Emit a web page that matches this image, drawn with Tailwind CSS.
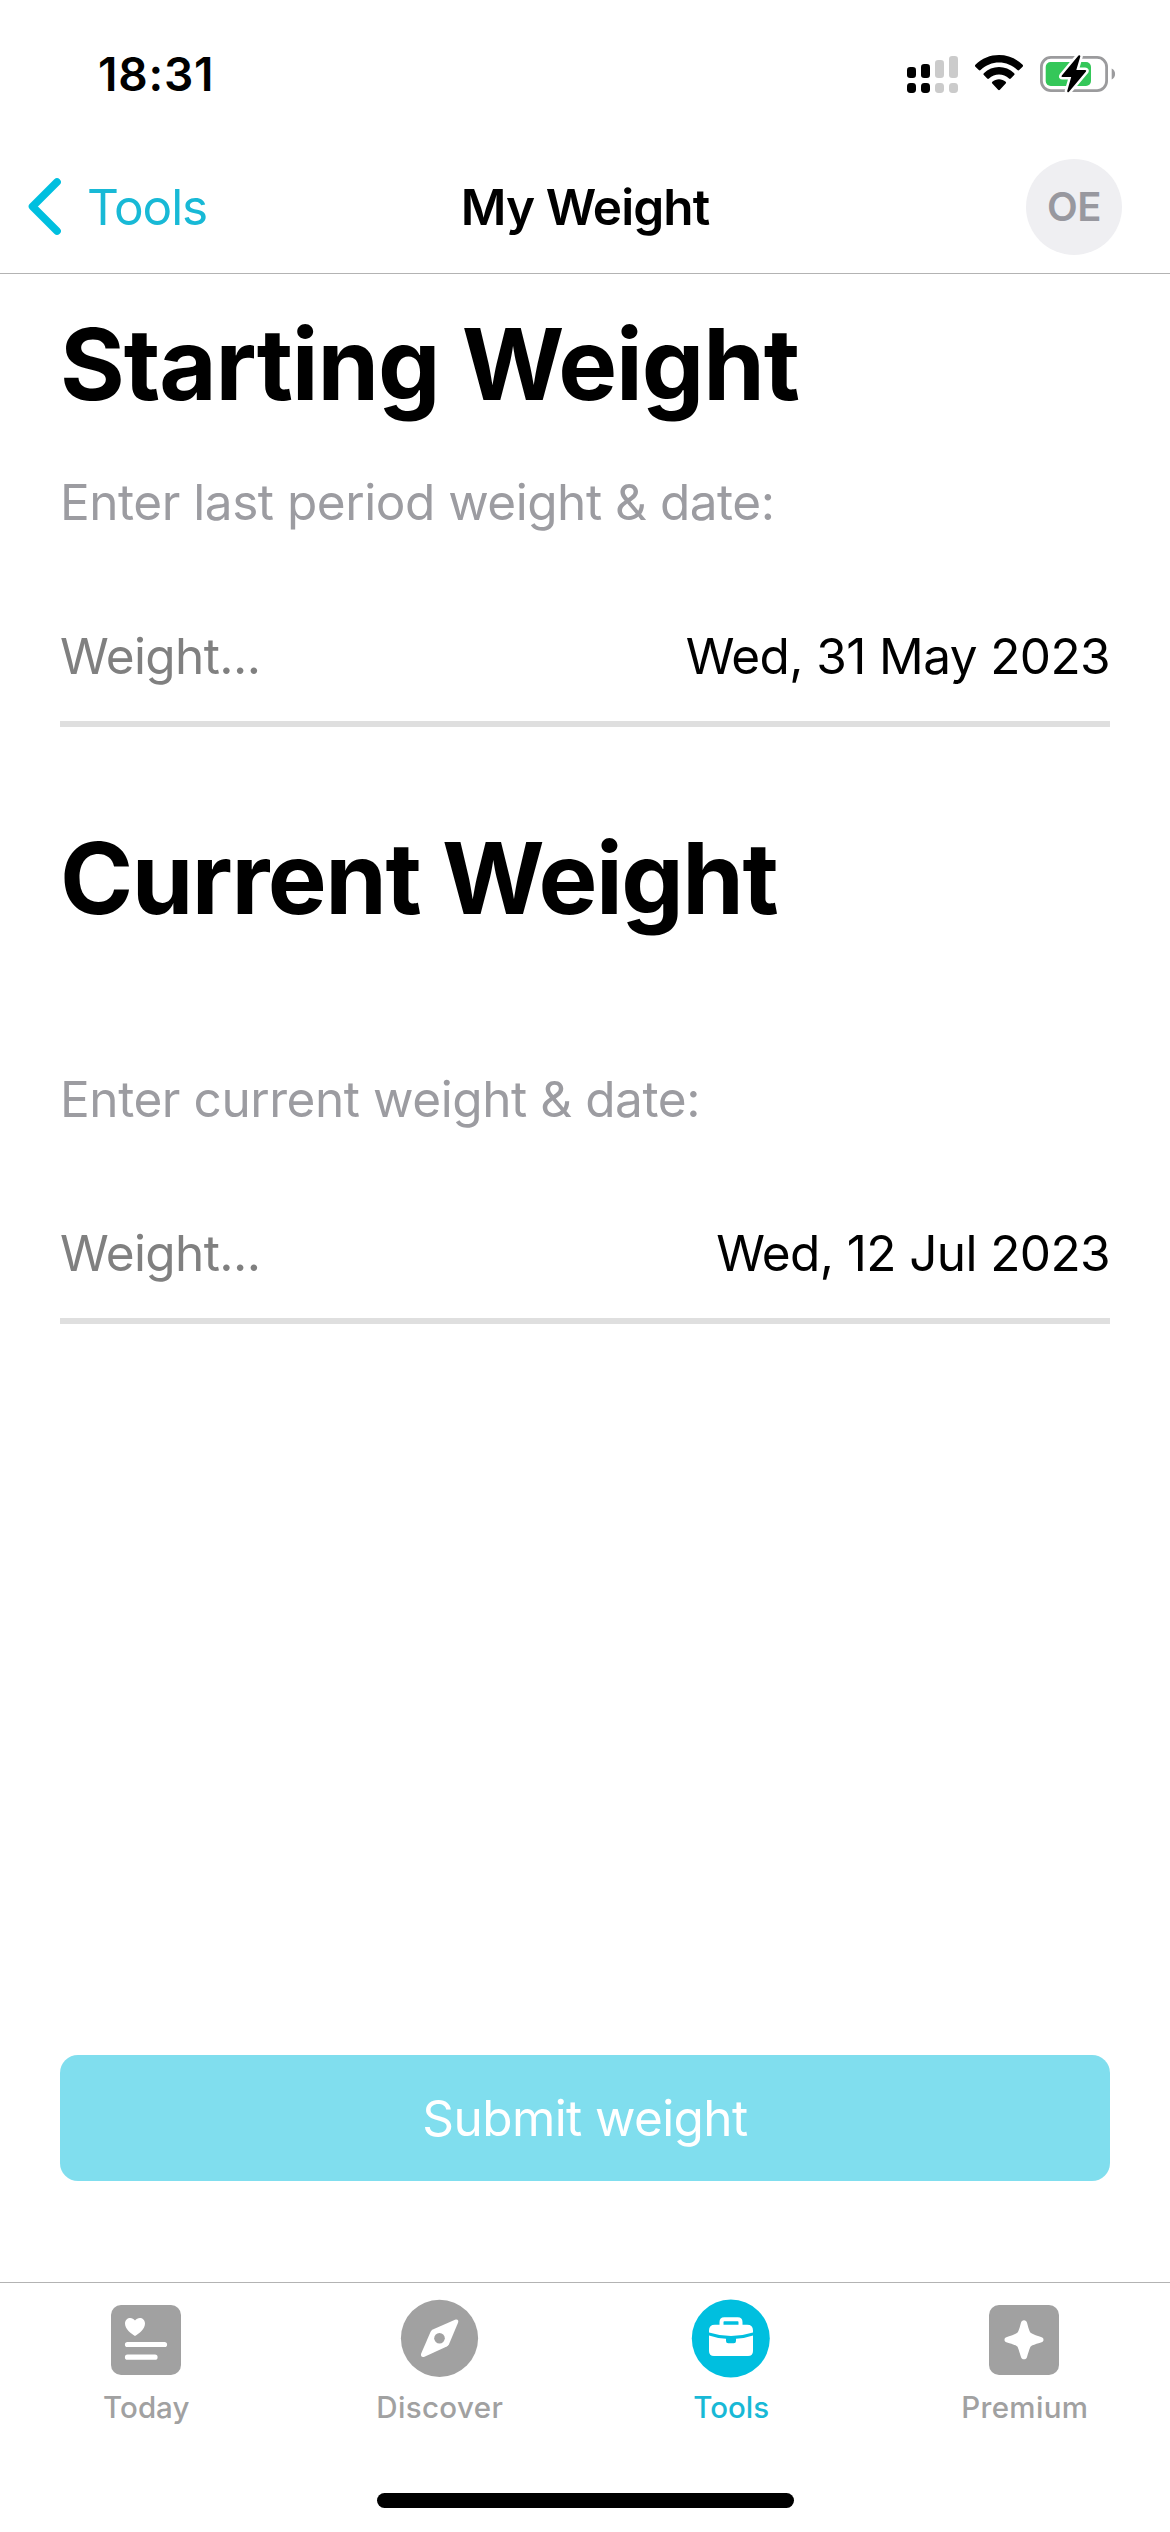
<!DOCTYPE html>
<html lang="en">
<head>
    <meta charset="UTF-8">
    <meta name="viewport" content="width=device-width, initial-scale=1.0">
    <title>My Weight</title>
    <script src="https://cdn.jsdelivr.net/npm/@tailwindcss/browser@4"></script>
</head>

<body class="bg-white font-[Inter,sans-serif] text-black">

    <div class="w-[1170px] h-[2532px] flex flex-col overflow-hidden">

        <!-- status bar -->
        <div class="flex justify-between h-[141px] pt-[54px] pl-[98px] pr-[54px] shrink-0">
            <div class="text-[46px] leading-[41px] h-10 font-semibold tracking-[0.8px]">18:31</div>

            <div class="flex gap-4">
                <svg class="w-[51px] h-10" viewBox="0 0 51 40">
                    <rect x="0" y="13" width="9" height="11" rx="3.2"/>
                    <rect x="14" y="10" width="9" height="14" rx="3.2"/>
                    <rect x="28" y="6" width="9" height="18" rx="3.2" fill="#cbcbcb"/>
                    <rect x="42" y="2" width="9" height="22" rx="3.2" fill="#cbcbcb"/>
                    <rect x="0" y="29" width="9" height="10" rx="3.4"/>
                    <rect x="14" y="29" width="9" height="10" rx="3.4"/>
                    <rect x="28" y="29" width="9" height="10" rx="3.4" fill="#cbcbcb"/>
                    <rect x="42" y="29" width="9" height="10" rx="3.4" fill="#cbcbcb"/>
                </svg>
                <svg class="w-[50px] h-10" viewBox="0 0 50 40">
                    <path d="M1.4 10.8C14.3-2.2 35.7-2.2 48.6 10.8Q49.5 11.8 48.6 12.7L45.2 16.1Q44.3 16.9 43.4 16.1C33.2 6.1 16.8 6.1 6.6 16.1Q5.7 16.9 4.8 16.1L1.4 12.7Q.5 11.8 1.4 10.8Z"/>
                    <path d="M9.8 19.2C18.2 11 31.8 11 40.2 19.2Q41.1 20.2 40.2 21.1L36.8 24.5Q35.9 25.3 35 24.5C29.4 19.2 20.6 19.2 15 24.5Q14.1 25.3 13.2 24.5L9.8 21.1Q8.9 20.2 9.8 19.2Z"/>
                    <path d="M18.3 27.7C22.1 24.3 27.9 24.3 31.7 27.7Q32.6 28.7 31.7 29.6L25.9 35.8Q25 36.7 24.1 35.8L18.3 29.6Q17.4 28.7 18.3 27.7Z"/>
                </svg>
                <svg class="w-[76px] h-10" viewBox="0 0 76 40">
                    <rect x="1.4" y="3.4" width="65.2" height="33.2" rx="9.5" fill="none" stroke="#9b9b9d" stroke-width="2.8"/>
                    <rect x="5.7" y="8" width="45.3" height="24" rx="5" fill="#34c759"/>
                    <path d="M71.7 14.5V25.5C76.2 23.5 76.2 16.5 71.7 14.5Z" fill="#9b9b9d"/>
                    <path d="M38.5 1.5L21.8 21.6Q20.8 23.1 22.6 23.1H31.2L27.2 37Q27.3 39.2 29 37.8L46 17.6Q46.9 16.1 45.1 16.1H36.3L40.3 2.5Q40.3.6 38.5 1.5Z" stroke="#fff" stroke-width="5" paint-order="stroke"/>
                </svg>
            </div>
        </div>

        <!-- nav bar -->
        <header class="grid grid-cols-3 items-center h-[133px] px-7 border-b border-[#b3b3b3] shrink-0">
            <a href="#" class="flex items-center gap-[26px] text-[#18b9d6]">
                <svg class="w-[33px] h-16" viewBox="0 0 33 64" fill="none" stroke="#00bfdf" stroke-width="7.6" stroke-linecap="round" stroke-linejoin="round">
                    <path d="M29 7L4.5 31.5L29 56"/>
                </svg>
                <span class="text-[49.5px] leading-[60px] tracking-[-1.1px]">Tools</span>
            </a>
            <h1 class="text-center whitespace-nowrap text-[49.5px] leading-[60px] font-semibold tracking-[-0.9px]">My Weight</h1>
            <div class="justify-self-end mr-5 flex items-center justify-center w-24 h-24 rounded-full bg-[#efeff2] text-[#98989f] text-[40px] font-semibold tracking-[-0.5px]">OE</div>
        </header>

        <main class="flex flex-col flex-1 px-[60px] pt-[30px] pb-[101px]">
            <h2 class="text-[99px] leading-[120px] font-bold tracking-[-1.15px]">Starting Weight</h2>
            <p class="mt-12 text-[49.5px] leading-[60px] tracking-[-0.47px] text-[#9c9ca1]">Enter last period weight &amp; date:</p>
            <div class="flex justify-between mt-[94px] pb-[35px] border-b-6 border-[#dfdfdf] text-[49.5px] leading-[60px] tracking-[-0.6px]">
                <span class="text-[#808080]">Weight...</span>
                <span>Wed, 31 May 2023</span>
            </div>

            <h2 class="mt-[91px] text-[99px] leading-[120px] font-bold tracking-[-1.5px]">Current Weight</h2>
            <p class="mt-[131px] text-[49.5px] leading-[60px] tracking-[-0.43px] text-[#9c9ca1]">Enter current weight &amp; date:</p>
            <div class="flex justify-between mt-[94px] pb-[35px] border-b-6 border-[#dfdfdf] text-[49.5px] leading-[60px] tracking-[-0.6px]">
                <span class="text-[#808080]">Weight...</span>
                <span>Wed, 12 Jul 2023</span>
            </div>

            <button class="mt-auto h-[126px] rounded-[18px] bg-[#80deee] text-white text-[49.5px] leading-[60px] tracking-[-0.6px]">Submit weight</button>
        </main>

        <!-- tab bar -->
        <footer class="flex flex-col items-center h-[250px] border-t border-[#b3b3b3] shrink-0">
            <nav class="grid grid-cols-4 w-full pt-[15px] text-center text-[29.5px] leading-9 font-medium text-[#a1a1a1]">
                <a href="#" class="flex flex-col items-center gap-[11px]">
                    <svg class="w-20 h-20" viewBox="0 0 80 80">
                        <rect x="5" y="7" width="70" height="70" rx="10" fill="#a1a1a1"/>
                        <path d="M29 38C25 35.5 19 31 19 25.5C19 19.5 26 18 29 22.5C32 18 39 19.5 39 25.5C39 31 33 35.5 29 38Z" fill="#fff"/>
                        <path d="M21.5 46.5H58.5M21.5 59.2H49" stroke="#fff" stroke-width="5.2" stroke-linecap="round"/>
                    </svg>
                    <span>Today</span>
                </a>
                <a href="#" class="flex flex-col items-center gap-[11px]">
                    <svg class="w-20 h-20" viewBox="0 0 80 80">
                        <circle cx="40.5" cy="40.3" r="38.6" fill="#a1a1a1"/>
                        <path d="M56 21.7C58.5 20.7 60 22.3 59 24.7L50 46.3Q49.3 47.8 47.8 48.6L25.5 58.7C23 59.7 21.2 58 22.2 55.6L31.6 33.8Q32.3 32.3 33.8 31.6Z" fill="#fff"/>
                        <circle cx="40.5" cy="40.3" r="5.3" fill="#a1a1a1"/>
                    </svg>
                    <span class="pl-0.5 tracking-[0.35px]">Discover</span>
                </a>
                <a href="#" class="flex flex-col items-center gap-[11px] text-[#18b9d6]">
                    <svg class="w-20 h-20" viewBox="0 0 80 80">
                        <circle cx="39.8" cy="40.5" r="39" fill="#00bfdf"/>
                        <path d="M30.5 28V24Q30.5 21.2 33.3 21.2H46.7Q49.5 21.2 49.5 24V28" fill="none" stroke="#fff" stroke-width="4"/>
                        <path d="M18 34.5V32.5Q18 26.7 23.8 26.7H56.2Q62 26.7 62 32.5V34.5Q40 41.5 18 34.5Z" fill="#fff"/>
                        <path d="M18 37.5Q26 40.3 35 40.8V43Q35 45.2 37.2 45.2H42.8Q45 45.2 45 43V40.8Q54 40.3 62 37.5V53Q62 58 57 58H23Q18 58 18 53Z" fill="#fff"/>
                    </svg>
                    <span>Tools</span>
                </a>
                <a href="#" class="flex flex-col items-center gap-[11px]">
                    <svg class="w-20 h-20" viewBox="0 0 80 80">
                        <rect x="5" y="7" width="70" height="70" rx="10" fill="#a1a1a1"/>
                        <path d="M40 22.3C41.5 22.3 42.6 23.2 43.1 25C45 32.5 46 34.5 47.5 35.3C49 36.3 51 37 57 39C58.8 39.6 59.5 40.5 59.5 41.7C59.5 43 58.8 43.9 57 44.4C50 46.5 47.5 47.3 46.7 48.5C45.8 50 45 52.5 43.1 58.7C42.6 60.5 41.5 61.3 40 61.3C38.5 61.3 37.4 60.5 36.9 58.7C35 52.5 34.2 50 33.3 48.5C32.5 47.3 30 46.5 23 44.4C21.2 43.9 20.5 43 20.5 41.7C20.5 40.5 21.2 39.6 23 39C29 37 31 36.3 32.5 35.3C34 34.5 35 32.5 36.9 25C37.4 23.2 38.5 22.3 40 22.3Z" fill="#fff"/>
                    </svg>
                    <span class="pl-0.5 tracking-[0.35px]">Premium</span>
                </a>
            </nav>
            <div class="mt-auto mb-6 w-[417px] h-[15px] rounded-full bg-black"></div>
        </footer>
    </div>
</body>
</html>
